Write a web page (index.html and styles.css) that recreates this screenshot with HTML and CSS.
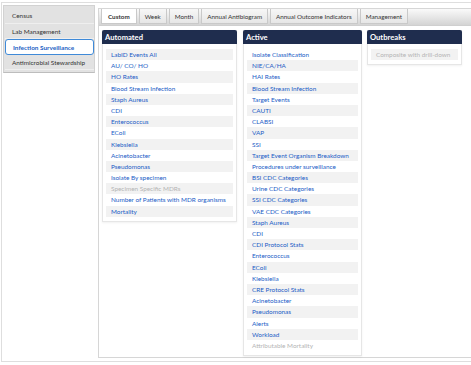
FILE: index.html
```html
<!DOCTYPE html>
<html lang="en">
<head>
  <meta charset="UTF-8">
  <meta name="viewport" content="width=device-width, initial-scale=1.0">
  <title>Infection Surveillance</title>
  <link rel="stylesheet" href="styles.css">
</head>
<body>
  <div class="page">
    <ul class="sideNav">
      <li>Census</li>
      <li>Lab Management</li>
      <li class="selected">Infection Surveillance</li>
      <li>Antimicrobial Stewardship</li>
    </ul>

    <div class="main">
      <div class="tabBar">
        <span class="tab current">Custom</span>
        <span class="tab">Week</span>
        <span class="tab">Month</span>
        <span class="tab">Annual Antibiogram</span>
        <span class="tab">Annual Outcome Indicators</span>
        <span class="tab">Management</span>
      </div>

      <div class="tabContent">
        <div class="reportPanel automated">
          <h2>Automated</h2>
          <ul class="reportList">
            <li><a>LabID Events All</a></li>
            <li><a>AU/ CO/ HO</a></li>
            <li><a>HO Rates</a></li>
            <li><a>Blood Stream Infection</a></li>
            <li><a>Staph Aureus</a></li>
            <li><a>CDI</a></li>
            <li><a>Enterococcus</a></li>
            <li><a>EColi</a></li>
            <li><a>Klebsiella</a></li>
            <li><a>Acinetobacter</a></li>
            <li><a>Pseudomonas</a></li>
            <li><a>Isolate By specimen</a></li>
            <li class="disabled">Specimen Specific MDRs</li>
            <li><a>Number of Patients with MDR organisms</a></li>
            <li><a>Mortality</a></li>
          </ul>
        </div>

        <div class="reportPanel active">
          <h2>Active</h2>
          <ul class="reportList">
            <li><a>Isolate Classification</a></li>
            <li><a>NIE/CA/HA</a></li>
            <li><a>HAI Rates</a></li>
            <li><a>Blood Stream Infection</a></li>
            <li><a>Target Events</a></li>
            <li><a>CAUTI</a></li>
            <li><a>CLABSI</a></li>
            <li><a>VAP</a></li>
            <li><a>SSI</a></li>
            <li><a>Target Event Organism Breakdown</a></li>
            <li><a>Procedures under surveillance</a></li>
            <li><a>BSI CDC Categories</a></li>
            <li><a>Urine CDC Categories</a></li>
            <li><a>SSI CDC Categories</a></li>
            <li><a>VAE CDC Categories</a></li>
            <li><a>Staph Aureus</a></li>
            <li><a>CDI</a></li>
            <li><a>CDI Protocol Stats</a></li>
            <li><a>Enterococcus</a></li>
            <li><a>EColi</a></li>
            <li><a>Klebsiella</a></li>
            <li><a>CRE Protocol Stats</a></li>
            <li><a>Acinetobacter</a></li>
            <li><a>Pseudomonas</a></li>
            <li><a>Alerts</a></li>
            <li><a>Workload</a></li>
            <li class="disabled">Attributable Mortality</li>
          </ul>
        </div>

        <div class="reportPanel outbreaks">
          <h2>Outbreaks</h2>
          <ul class="reportList">
            <li class="disabled">Composite with drill-down</li>
          </ul>
        </div>
      </div>
    </div>
  </div>
</body>
</html>
```

FILE: styles.css
```css
* { box-sizing: border-box; }
body { margin: 0; font-family: Lato, "Open Sans", sans-serif; color: #333; background: #fff; }
ul { list-style: none; margin: 0; padding: 0; }

.page {
  display: flex;
  align-items: flex-start;
  margin: 2px 0 0 1px;
  padding: 2px 0 3px 1px;
  border: 1px solid #dedede;
  border-right: 0;
}

.sideNav {
  width: 92px;
  padding: 2px 0 2px 1px;
  background: #e2e2e2;
  border: 1px solid #d2d2d2;
  border-bottom-color: #bdbdbd;
}
.sideNav li {
  height: 15.5px;
  line-height: 15px;
  padding-left: 7px;
  font-size: 6.4px;
  color: #333;
  border-bottom: 1px solid #efefef;
}
.sideNav li.selected {
  background: #fff;
  border: 1px solid #3f8ad8;
  border-radius: 3px;
  color: #1d5fc4;
  font-weight: 700;
}

.main {
  flex: 1;
  margin: 3px 0 0 3px;
  border: 1px solid #d6d6d6;
  border-right: 0;
}

.tabBar {
  display: flex;
  gap: 2px;
  height: 17px;
  padding: 0 0 0 2px;
  background: linear-gradient(#fafafa, #d4d4d4);
  border-bottom: 1px solid #cfcfcf;
}
.tab {
  height: 15px;
  padding: 0 5px;
  line-height: 15px;
  font-size: 6.3px;
  color: #333;
  background: linear-gradient(#f7f7f7, #e6e6e6);
  border: 1px solid #c9c9c9;
  border-top: 0;
}
.tab.current { background: #fff; font-weight: 700; padding: 0 6px; }

.tabContent {
  display: flex;
  align-items: flex-start;
  gap: 5px;
  height: 331px;
  padding: 4px 0 0 3px;
  background: #fff;
}

.reportPanel {
  background: #fff;
  border: 1px solid #e6e6e6;
  border-top: 0;
  box-shadow: 0 1px 2px rgba(0, 0, 0, 0.06);
}
.automated { width: 135px; margin-right: 1px; }
.active { width: 119px; }
.outbreaks { width: 95px; }

.reportPanel h2 {
  margin: 0 -1px;
  height: 14px;
  padding-left: 3px;
  line-height: 14px;
  font-size: 7.6px;
  font-weight: 700;
  color: #fff;
  background: #1f2d4e;
  border-radius: 2px 2px 0 0;
}

.reportList { padding: 5px 3px 4px; }
.reportList li {
  height: 11.2px;
  line-height: 11.2px;
  padding-left: 5px;
  font-size: 6.4px;
  white-space: nowrap;
  overflow: hidden;
}
.reportList a { color: #1a5cc6; }
.reportList li.disabled { color: #b4b4b4; }
.automated li:nth-child(odd),
.active li:nth-child(even),
.outbreaks li { background: #f2f2f2; }
```
